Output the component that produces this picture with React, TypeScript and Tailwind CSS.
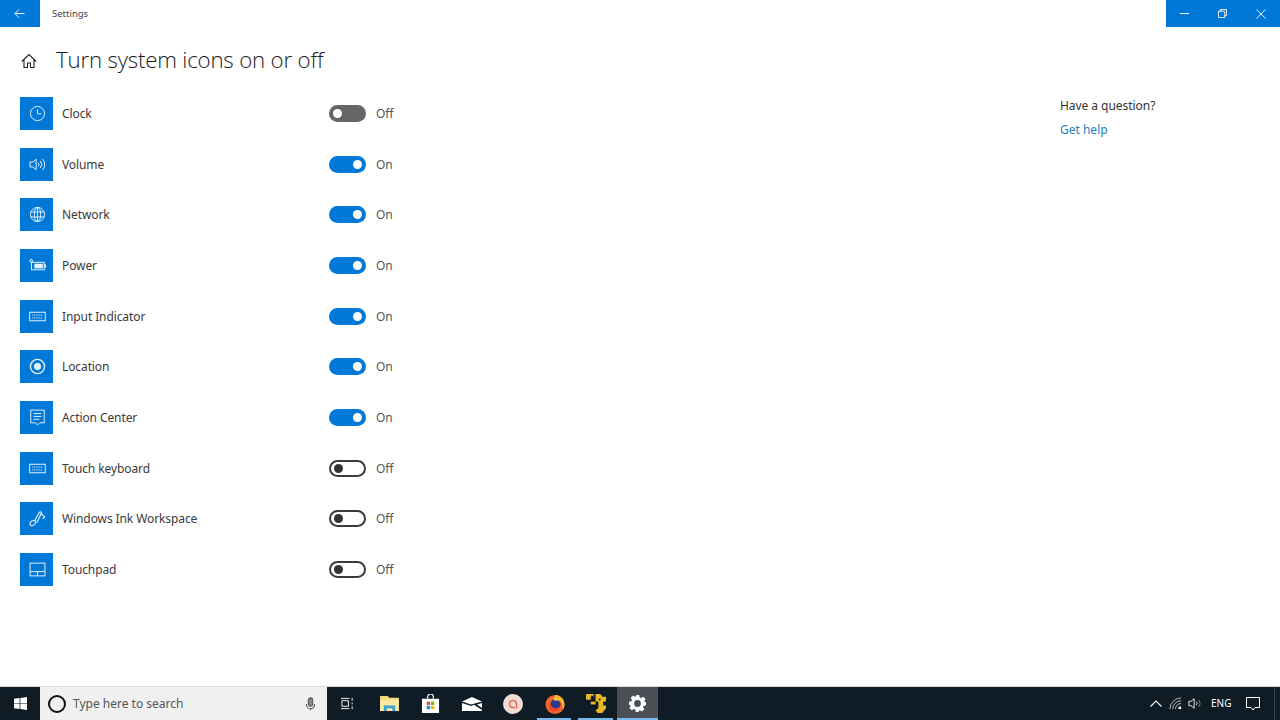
import { ReactNode } from "react";

const font = "font-['Noto_Sans','Open_Sans',sans-serif]";

// row icons, all on a 24 box and drawn in white
const rowIcons: Record<string, ReactNode> = {
  clock: (
    <>
      <circle cx="12" cy="12" r="10" />
      <path d="M12 6v6.500h5.500" />
    </>
  ),
  volume: (
    <>
      <path d="M1.500 8.500h4L10 4.500v15l-4.500-4h-4z" />
      <path d="M13 9.500a4 4 0 0 1 0 5" />
      <path d="M16 7a8 8 0 0 1 0 10" />
      <path d="M19 4a12 12 0 0 1 0 16" />
    </>
  ),
  network: (
    <>
      <circle cx="12" cy="12" r="10" />
      <ellipse cx="12" cy="12" rx="4.500" ry="10" />
      <path d="M12 2v20M3 8.500h18M3 15.500h18" />
    </>
  ),
  power: (
    <>
      <rect x="3.500" y="7.500" width="18" height="10.500" />
      <rect x="7.500" y="9.500" width="12" height="6.500" fill="#fff" stroke="none" />
      <path d="M21.500 11h1.800v3.500h-1.800" fill="#fff" />
      <circle cx="3" cy="5.500" r="2" />
    </>
  ),
  keyboard: (
    <>
      <rect x="1" y="6" width="22" height="12" />
      <path d="M4.500 10h15M4.500 14h15" strokeDasharray="1.500 1" />
    </>
  ),
  location: (
    <>
      <circle cx="12" cy="12" r="10" strokeWidth="2" />
      <circle cx="12" cy="12" r="4.500" fill="#fff" />
    </>
  ),
  action: (
    <>
      <path d="M2.500 1.500h19v18H15l-3 3-3-3H2.500z" />
      <path d="M6.500 6.500h11M6.500 10.500h11M6.500 14.500h8" />
    </>
  ),
  ink: (
    <>
      <path d="M3 22c-2.500-1.500-2-5 1-6.500s6-.5 5.500 2-4 5.500-6.500 4.500z" strokeWidth="1.600" />
      <path d="M8 15L14.500 3.500c1-1.500 3.500-1 3 1L11 18" strokeWidth="1.600" />
      <path d="M16.500 4.500L22 9.500l-2.500 3" strokeWidth="1.600" />
    </>
  ),
  touchpad: (
    <>
      <rect x="1.500" y="3" width="21" height="18" />
      <path d="M1.500 15h21M12 15v6" />
    </>
  ),
};

const rows = [
  { name: "Clock", icon: "clock", state: "disabled" },
  { name: "Volume", icon: "volume", state: "on" },
  { name: "Network", icon: "network", state: "on" },
  { name: "Power", icon: "power", state: "on" },
  { name: "Input Indicator", icon: "keyboard", state: "on" },
  { name: "Location", icon: "location", state: "on" },
  { name: "Action Center", icon: "action", state: "on" },
  { name: "Touch keyboard", icon: "keyboard", state: "off" },
  { name: "Windows Ink Workspace", icon: "ink", state: "off" },
  { name: "Touchpad", icon: "touchpad", state: "off" },
];

function Toggle({ state }: { state: string }) {
  if (state === "on") {
    return (
      <div className="flex h-[17px] w-[37px] items-center justify-end rounded-full bg-[#0078d7] pr-[4px]">
        <div className="h-[9px] w-[9px] rounded-full bg-white" />
      </div>
    );
  }
  if (state === "disabled") {
    return (
      <div className="flex h-[17px] w-[37px] items-center rounded-full bg-[#666666] pl-[4px]">
        <div className="h-[9px] w-[9px] rounded-full bg-white" />
      </div>
    );
  }
  return (
    <div className="flex h-[17px] w-[37px] items-center rounded-full border-2 border-[#3a3a3a] bg-white pl-[3px]">
      <div className="h-[9px] w-[9px] rounded-full bg-[#333333]" />
    </div>
  );
}

function Row({ name, icon, state }: { name: string; icon: string; state: string }) {
  return (
    <div className="flex h-[33px] items-center">
      <div className="flex h-[33px] w-[33px] items-center justify-center bg-[#0078d7]">
        <svg viewBox="0 0 24 24" className="ml-[1px] h-[17px] w-[17px] opacity-90" fill="none" stroke="#fff" strokeWidth="1.400">
          {rowIcons[icon]}
        </svg>
      </div>
      <div className="ml-[9px] w-[267px] pt-px text-[12px] leading-[18px] tracking-[-0.1px] text-[#3a3a3a]">{name}</div>
      <Toggle state={state} />
      <div className="ml-[10px] pt-px text-[12px] leading-[18px] text-[#555555]">{state === "on" ? "On" : "Off"}</div>
    </div>
  );
}

function TaskIcon({ children, active }: { children: ReactNode; active?: boolean }) {
  return (
    <div className={`relative flex h-[33px] w-[41.4px] items-center justify-center ${active ? "bg-[#4a5056]" : ""}`}>
      {children}
    </div>
  );
}

function Underline({ wide }: { wide?: boolean }) {
  return <div className={`absolute bottom-0 h-[2px] bg-[#76b9ed] ${wide ? "left-0 right-0" : "left-[3px] right-[4px]"}`} />;
}

export default function App() {
  return (
    <div className={`flex h-[720px] w-[1280px] flex-col overflow-hidden bg-white ${font}`}>
      {/* title bar */}
      <div className="flex h-[27px] items-center">
        <div className="flex h-[27px] w-[40px] items-center justify-center bg-[#0078d7]">
          <svg viewBox="0 0 12 12" className="mr-[2px] h-[11px] w-[11px]" fill="none" stroke="#fff" strokeWidth="1">
            <path d="M11.500 6H1M5.500 1.500L1 6l4.500 4.500" />
          </svg>
        </div>
        <div className="ml-[12px] pt-px text-[9.5px] text-[#444444]">Settings</div>
        <div className="ml-auto flex h-[27px] w-[114px] items-center bg-[#0078d7]">
          <div className="flex w-[38px] justify-center">
            <div className="mr-[2px] h-px w-[9px] bg-white" />
          </div>
          <div className="flex w-[38px] justify-center">
            <svg viewBox="0 0 10 10" className="mr-[2px] h-[9px] w-[9px]" fill="none" stroke="#fff" strokeWidth="1">
              <path d="M.5 2.500h7v7h-7zM2.500 2.500v-2h7v7h-2" />
            </svg>
          </div>
          <div className="flex w-[38px] justify-center">
            <svg viewBox="0 0 10 10" className="h-[10px] w-[10px]" fill="none" stroke="#fff" strokeWidth="0.900">
              <path d="M.5.5l9 9M9.500.5l-9 9" />
            </svg>
          </div>
        </div>
      </div>

      {/* page title */}
      <div className="flex h-[70px] items-center pb-[4px] pl-[21px]">
        <svg viewBox="0 0 16 16" className="mt-[2px] h-[16px] w-[16px]" fill="none" stroke="#222222" strokeWidth="1.100">
          <path d="M.8 8.500L8 1.500l7.200 7M3 7v7.500h3.500V10h3v4.500H13V7" />
        </svg>
        <div className="ml-[19px] font-['Open_Sans',sans-serif] text-[22.3px] font-light tracking-[-0.2px] text-[#1a1a1a]">
          Turn system icons on or off
        </div>
      </div>

      <div className="flex flex-1">
        <div className="flex flex-col gap-[17.67px] pl-[20px]">
          {rows.map((r) => (
            <Row key={r.name} name={r.name} icon={r.icon} state={r.state} />
          ))}
        </div>
        <div className="ml-auto w-[220px]">
          <div className="text-[12px] leading-[18px] tracking-[-0.05px] text-[#333333]">Have a question?</div>
          <div className="mt-[6px] text-[12px] leading-[18px] text-[#1b7fc4]">Get help</div>
        </div>
      </div>

      {/* taskbar */}
      <div className="flex h-[34px] border-t border-[#d8d8d8] bg-[#0f1c26]">
        <div className="flex h-[33px] w-[40px] items-center justify-center">
          <svg viewBox="0 0 14 14" className="h-[13px] w-[13px]" fill="#fff">
            <path d="M0 2l6-.9V6.600H0zM6.800 1L14 0v6.600H6.800zM0 7.400h6v5.500l-6-.9zM6.800 7.400H14V14l-7.200-1z" />
          </svg>
        </div>
        <div className="flex h-[33px] w-[287px] items-center bg-[#f0f0f0] pl-[8px] pr-[11px]">
          <div className="h-[18px] w-[18px] rounded-full border-2 border-[#111111]" />
          <div className="ml-[7px] text-[12px] text-[#555555]">Type here to search</div>
          <svg viewBox="0 0 12 16" className="ml-auto h-[14px] w-[11px]" fill="none" stroke="#555555" strokeWidth="1.200">
            <rect x="3.500" y="1" width="5" height="9.500" rx="2.500" fill="#888888" />
            <path d="M1.500 8v1a4.500 4.500 0 0 0 9 0V8M6 13.500V15" />
          </svg>
        </div>

        <div className="flex">
          <TaskIcon>
            <svg viewBox="0 0 16 14" className="mr-[1px] h-[13px] w-[15px]" fill="none" stroke="#fff" strokeWidth="1">
              <path d="M1 1.500h9M1 12.500h9M2 4h7v6H2zM13 1v3M13 6v2M13 10v3" />
            </svg>
          </TaskIcon>
          <TaskIcon>
            <svg viewBox="0 0 20 18" className="h-[17px] w-[19px]">
              <path d="M0 1h8l2 2h10v14H0z" fill="#f4d97b" />
              <path d="M0 5h20v12H0z" fill="#fbe6a2" />
              <path d="M4 17v-6h12v6h-3v-3H7v3z" fill="#3aa0d5" />
            </svg>
          </TaskIcon>
          <TaskIcon>
            <svg viewBox="0 0 20 20" className="h-[19px] w-[19px]">
              <path d="M7 5V3a3 3 0 0 1 6 0v2" fill="none" stroke="#fff" strokeWidth="1.200" />
              <rect x="1" y="5" width="18" height="15" fill="#fff" />
              <rect x="6" y="8" width="3.500" height="3.500" fill="#e2502e" />
              <rect x="10.500" y="8" width="3.500" height="3.500" fill="#7fb900" />
              <rect x="6" y="12.500" width="3.500" height="3.500" fill="#1b8ad6" />
              <rect x="10.500" y="12.500" width="3.500" height="3.500" fill="#f7b900" />
            </svg>
          </TaskIcon>
          <TaskIcon>
            <svg viewBox="0 0 20 14" className="h-[14px] w-[20px]">
              <path d="M0 4.500L10 0l10 4.500L9 7.500z" fill="#fff" />
              <path d="M0 6l9 3 3-1.200L20 13v1H0z" fill="#fff" />
              <path d="M20 6v5l-5-3.500z" fill="#fff" />
            </svg>
          </TaskIcon>
          <TaskIcon>
            <svg viewBox="0 0 20 20" className="h-[20px] w-[20px]">
              <circle cx="10" cy="10" r="10" fill="#f1dcd6" />
              <path d="M13.500 14.500V9.500a3.500 3.500 0 1 0-3.500 4h2" fill="none" stroke="#d9695c" strokeWidth="1.400" />
            </svg>
          </TaskIcon>
          <TaskIcon>
            <svg viewBox="0 0 20 20" className="h-[20px] w-[20px]">
              <circle cx="10" cy="10.500" r="9.500" fill="#f0662a" />
              <path d="M10 1c6 0 9.500 4.500 9.500 9.500 0 2-.6 3.500-1.500 5C18 9 14 5 10 5z" fill="#f9b72c" />
              <circle cx="10.500" cy="10" r="5" fill="#31388f" />
              <path d="M5 9c1 5 6 7 10 4-1 5-8 6-11 2-1-2-.5-4 1-6z" fill="#f4442e" />
              <path d="M8 4c3-1 6 1 7 4-2-2-3-2-5-1z" fill="#fbca3c" />
            </svg>
            <Underline />
          </TaskIcon>
          <TaskIcon>
            <svg viewBox="0 0 22 22" className="h-[21px] w-[21px]" fill="#e8b923">
              <path d="M0 1h8v3H5v3H0z" />
              <path d="M10 1h5l2 3h4v5h-3v4h3v3l-4 5h-5l-2-3 3-2V9h-3z" />
              <path d="M5 9h5v3H5z" />
              <path d="M15 5l-2 2 2 1zM6 2l2 2-3 1z" fill="#0f1c26" />
            </svg>
            <Underline />
          </TaskIcon>
          <TaskIcon active>
            <svg viewBox="0 0 20 20" className="h-[17px] w-[17px]">
              <path
                fillRule="evenodd"
                fill="#fff"
                d="M8 0h4l.6 2.800 1.700.7 2.400-1.500 2.800 2.800-1.500 2.400.7 1.700L20 8v4l-2.800.6-.7 1.700 1.500 2.400-2.800 2.800-2.400-1.500-1.700.7L12 20H8l-.6-2.800-1.700-.7-2.400 1.500-2.800-2.800 1.500-2.400-.7-1.700L0 12V8l2.800-.6.700-1.700L2 3.300 4.800.5l2.400 1.500 1.700-.7zM10 6a4 4 0 1 0 0 8 4 4 0 0 0 0-8z"
              />
            </svg>
            <Underline wide />
          </TaskIcon>
        </div>

        {/* system tray */}
        <div className="ml-auto flex h-[33px] items-center">
          <svg viewBox="0 0 12 7" className="h-[7px] w-[12px]" fill="none" stroke="#ffffff" strokeWidth="1.100">
            <path d="M.5 6.500L6 1l5.500 5.500" />
          </svg>
          <svg viewBox="0 0 14 14" className="ml-[7px] h-[13px] w-[13px]" fill="none" stroke="#bfc4c8" strokeWidth="1">
            <path d="M1 13A12 12 0 0 1 13 1M4 13a9 9 0 0 1 9-9M7 13a6 6 0 0 1 6-6" />
            <path d="M10 13a3 3 0 0 1 3-3v3z" fill="#fff" stroke="none" />
          </svg>
          <svg viewBox="0 0 16 14" className="ml-[6px] h-[13px] w-[14px]" fill="none" stroke="#ffffff" strokeWidth="1">
            <path d="M1 4.500h2.500L7 1.500v11l-3.500-3H1z" />
            <path d="M9.500 5a3 3 0 0 1 0 4" />
            <path d="M12 3a6 6 0 0 1 0 8" stroke="#8d9296" />
          </svg>
          <div className="ml-[9px] w-[20px] text-[10px] text-white">ENG</div>
          <svg viewBox="0 0 14 14" className="ml-[15px] h-[14px] w-[14px]" fill="none" stroke="#ffffff" strokeWidth="1">
            <path d="M.5.5h13v10H9l-2 2.500-2-2.500H.5z" />
          </svg>
          <div className="ml-[14px] mr-[5px] h-[33px] w-px bg-[#3a444c]" />
        </div>
      </div>
    </div>
  );
}
